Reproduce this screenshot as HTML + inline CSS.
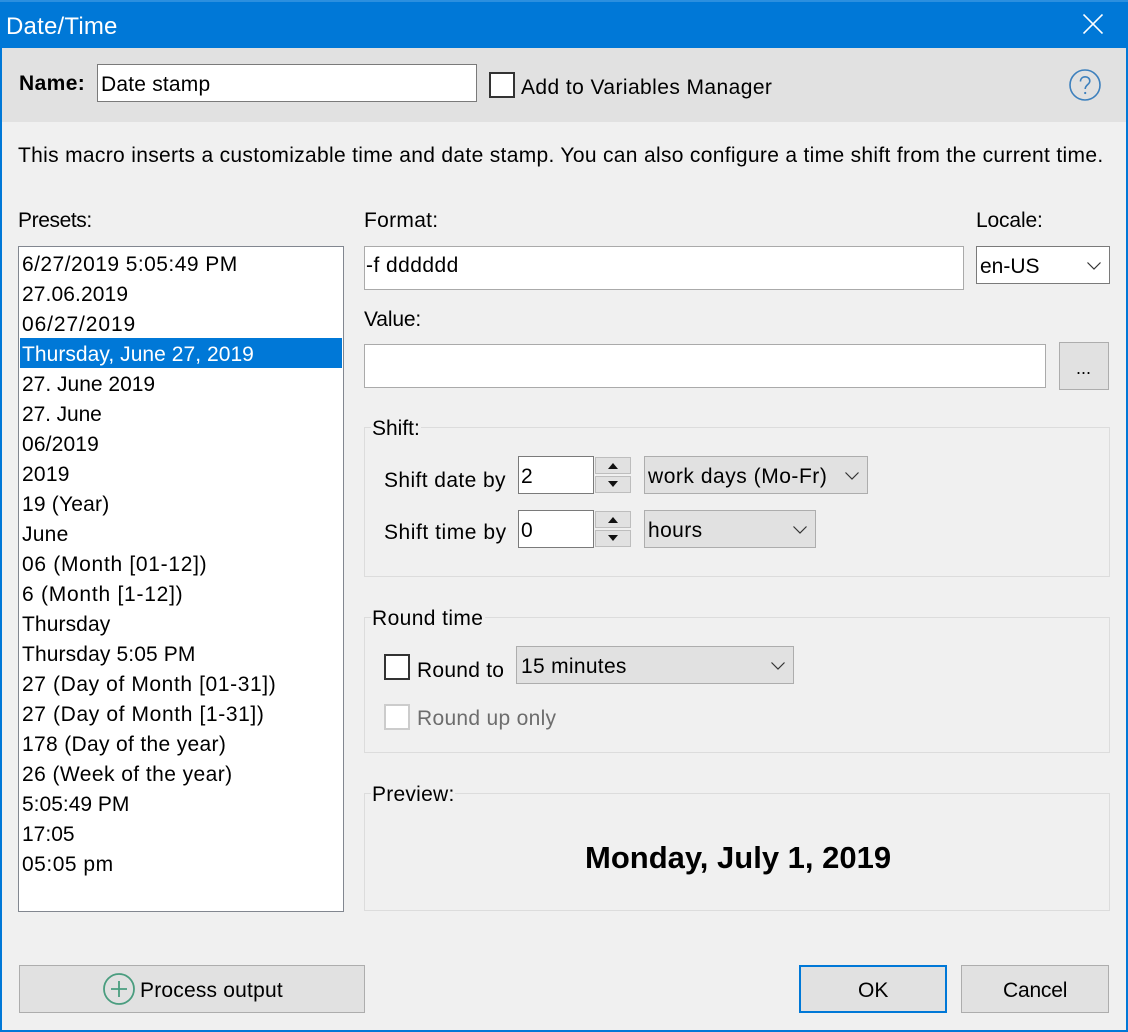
<!DOCTYPE html>
<html lang="en">
<head>
<meta charset="utf-8">
<title>Date/Time</title>
<style>
html,body{margin:0;padding:0;width:1128px;height:1032px;overflow:hidden;background:#f0f0f0}
body{position:relative;font-family:"Liberation Sans",sans-serif;font-size:21px;color:#000}
div,svg{position:absolute;box-sizing:border-box}
.t{white-space:nowrap;line-height:30px;height:30px;margin-top:1px}
.box{background:#fff;border:1px solid #aaa}
.btn{background:#e1e1e1;border:1px solid #adadad}
.grp{border:1px solid #dcdcdc;left:364px;width:746px}
.leg{background:#f0f0f0;height:4px}
.cb{width:26px;height:26px;background:#fff;border:2px solid #333}
.sp{left:595px;width:36px;height:17px;background:#e1e1e1;border:1px solid #bdbdbd}
.up{left:12px;top:5px;width:0;height:0;border-left:5px solid transparent;border-right:5px solid transparent;border-bottom:6px solid #111}
.dn{left:12px;top:4px;width:0;height:0;border-left:5px solid transparent;border-right:5px solid transparent;border-top:6px solid #111}
.li{left:20px;width:322px;height:30px;line-height:30px;padding:2px 0 0 2px;white-space:nowrap}
</style>
</head>
<body>
<div style="left:0;top:0;width:1128px;height:1032px;border:2px solid #0078d7;border-top:0"></div>
<div style="left:0;top:0;width:1128px;height:48px;background:#0078d7"></div>
<div style="left:0;top:0;width:1128px;height:2px;background:#2b8fdf"></div>
<div class="t" style="left:6px;top:11px;color:#fff;font-size:24px;letter-spacing:.2px">Date/Time</div>
<svg style="left:1083px;top:14px" width="20" height="20" viewBox="0 0 20 20"><path d="M.5.5l19 19M19.500.5l-19 19" stroke="#fff" stroke-width="1.600" fill="none"/></svg>

<div style="left:2px;top:48px;width:1124px;height:74px;background:#e1e1e1"></div>
<div class="t" style="left:19px;top:68px;font-weight:bold;letter-spacing:.4px">Name:</div>
<div class="box" style="left:97px;top:64px;width:380px;height:38px;border-color:#7a7a7a"></div>
<div class="t" style="left:101px;top:69px;letter-spacing:.2px">Date stamp</div>
<div class="cb" style="left:489px;top:72px"></div>
<div class="t" style="left:521px;top:72px;letter-spacing:.42px">Add to Variables Manager</div>
<svg style="left:1069px;top:69px" width="32" height="32" viewBox="0 0 32 32"><circle cx="16" cy="16" r="15" fill="none" stroke="#3d80bd" stroke-width="1.600"/><path d="M11.500 12.500c0-3 2-4.700 4.700-4.700s4.600 1.800 4.600 4.200c0 3.600-4.600 3.800-4.600 8" fill="none" stroke="#3d80bd" stroke-width="1.600"/><circle cx="16.200" cy="24" r="1.100" fill="#3d80bd"/></svg>

<div class="t" style="left:18px;top:140px;letter-spacing:.32px">This macro inserts a customizable time and date stamp. You can also configure a time shift from the current time.</div>

<div class="t" style="left:18px;top:205px;letter-spacing:-.4px">Presets:</div>
<div class="t" style="left:364px;top:205px;letter-spacing:.3px">Format:</div>
<div class="t" style="left:976px;top:205px;letter-spacing:-.15px">Locale:</div>

<div class="box" style="left:18px;top:246px;width:326px;height:666px;border-color:#828790"></div>
<div class="li" style="top:248px;letter-spacing:.45px">6/27/2019 5:05:49 PM</div>
<div class="li" style="top:278px;letter-spacing:.1px">27.06.2019</div>
<div class="li" style="top:308px;letter-spacing:.9px">06/27/2019</div>
<div class="li" style="top:338px;background:#0078d7;color:#fff;letter-spacing:.05px">Thursday, June 27, 2019</div>
<div class="li" style="top:368px">27. June 2019</div>
<div class="li" style="top:398px;letter-spacing:-.1px">27. June</div>
<div class="li" style="top:428px;letter-spacing:.15px">06/2019</div>
<div class="li" style="top:458px;letter-spacing:.25px">2019</div>
<div class="li" style="top:488px;letter-spacing:.2px">19 (Year)</div>
<div class="li" style="top:518px;letter-spacing:.25px">June</div>
<div class="li" style="top:548px;letter-spacing:.7px">06 (Month [01-12])</div>
<div class="li" style="top:578px;letter-spacing:.75px">6 (Month [1-12])</div>
<div class="li" style="top:608px;letter-spacing:.1px">Thursday</div>
<div class="li" style="top:638px;letter-spacing:.12px">Thursday 5:05 PM</div>
<div class="li" style="top:668px;letter-spacing:.6px">27 (Day of Month [01-31])</div>
<div class="li" style="top:698px;letter-spacing:.62px">27 (Day of Month [1-31])</div>
<div class="li" style="top:728px;letter-spacing:.33px">178 (Day of the year)</div>
<div class="li" style="top:758px;letter-spacing:.43px">26 (Week of the year)</div>
<div class="li" style="top:788px">5:05:49 PM</div>
<div class="li" style="top:818px">17:05</div>
<div class="li" style="top:848px;letter-spacing:.5px">05:05 pm</div>

<div class="box" style="left:364px;top:246px;width:600px;height:44px"></div>
<div class="t" style="left:366px;top:250px;letter-spacing:.45px">-f dddddd</div>
<div class="box" style="left:976px;top:246px;width:134px;height:38px;border-color:#7a7a7a"></div>
<div class="t" style="left:980px;top:251px">en-US</div>
<svg style="left:1087px;top:262px" width="14" height="8" viewBox="0 0 14 8"><path d="M.5.5L7 7l6.500-6.500" fill="none" stroke="#333" stroke-width="1.200"/></svg>

<div class="t" style="left:364px;top:304px;letter-spacing:-.15px">Value:</div>
<div class="box" style="left:364px;top:344px;width:682px;height:44px"></div>
<div class="btn" style="left:1059px;top:342px;width:50px;height:48px"></div>
<div class="t" style="left:1076px;top:352px;font-size:18px">...</div>

<div class="grp" style="top:427px;height:150px"></div>
<div class="leg" style="left:371px;top:425px;width:50px"></div>
<div class="t" style="left:372px;top:413px">Shift:</div>
<div class="t" style="left:384px;top:465px;letter-spacing:.4px">Shift date by</div>
<div class="box" style="left:518px;top:456px;width:76px;height:38px;border-color:#7a7a7a"></div>
<div class="t" style="left:521px;top:461px">2</div>
<div class="sp" style="top:457px"><div class="up"></div></div>
<div class="sp" style="top:476px"><div class="dn"></div></div>
<div class="btn" style="left:644px;top:456px;width:224px;height:38px"></div>
<div class="t" style="left:648px;top:461px;letter-spacing:.53px">work days (Mo-Fr)</div>
<svg style="left:845px;top:472px" width="14" height="8" viewBox="0 0 14 8"><path d="M.5.5L7 7l6.500-6.500" fill="none" stroke="#333" stroke-width="1.200"/></svg>

<div class="t" style="left:384px;top:517px;letter-spacing:.55px">Shift time by</div>
<div class="box" style="left:518px;top:510px;width:76px;height:38px;border-color:#7a7a7a"></div>
<div class="t" style="left:521px;top:515px">0</div>
<div class="sp" style="top:511px"><div class="up"></div></div>
<div class="sp" style="top:530px"><div class="dn"></div></div>
<div class="btn" style="left:644px;top:510px;width:172px;height:38px"></div>
<div class="t" style="left:648px;top:515px;letter-spacing:.4px">hours</div>
<svg style="left:793px;top:526px" width="14" height="8" viewBox="0 0 14 8"><path d="M.5.5L7 7l6.500-6.500" fill="none" stroke="#333" stroke-width="1.200"/></svg>

<div class="grp" style="top:617px;height:136px"></div>
<div class="leg" style="left:371px;top:615px;width:114px"></div>
<div class="t" style="left:372px;top:603px;letter-spacing:.4px">Round time</div>
<div class="cb" style="left:384px;top:654px"></div>
<div class="t" style="left:417px;top:655px;letter-spacing:.25px">Round to</div>
<div class="btn" style="left:516px;top:646px;width:278px;height:38px"></div>
<div class="t" style="left:521px;top:651px;letter-spacing:.3px">15 minutes</div>
<svg style="left:771px;top:662px" width="14" height="8" viewBox="0 0 14 8"><path d="M.5.5L7 7l6.500-6.500" fill="none" stroke="#333" stroke-width="1.200"/></svg>
<div class="cb" style="left:384px;top:704px;border-color:#ccc"></div>
<div class="t" style="left:417px;top:703px;color:#6d6d6d;letter-spacing:.3px">Round up only</div>

<div class="grp" style="top:793px;height:118px"></div>
<div class="leg" style="left:371px;top:791px;width:84px"></div>
<div class="t" style="left:372px;top:779px;letter-spacing:.25px">Preview:</div>
<div class="t" style="left:585px;top:842px;font-weight:bold;font-size:31px">Monday, July 1, 2019</div>

<div class="btn" style="left:19px;top:965px;width:346px;height:48px"></div>
<svg style="left:103px;top:973px" width="32" height="32" viewBox="0 0 32 32"><circle cx="16" cy="16" r="15" fill="none" stroke="#4a9d7f" stroke-width="1.800"/><path d="M16 8v16M8 16h16" fill="none" stroke="#4a9d7f" stroke-width="1.800"/></svg>
<div class="t" style="left:140px;top:975px;letter-spacing:.2px">Process output</div>
<div class="btn" style="left:799px;top:965px;width:148px;height:48px;border:2px solid #0078d7"></div>
<div class="t" style="left:858px;top:975px">OK</div>
<div class="btn" style="left:961px;top:965px;width:148px;height:48px"></div>
<div class="t" style="left:1003px;top:975px;letter-spacing:-.2px">Cancel</div>
</body>
</html>
